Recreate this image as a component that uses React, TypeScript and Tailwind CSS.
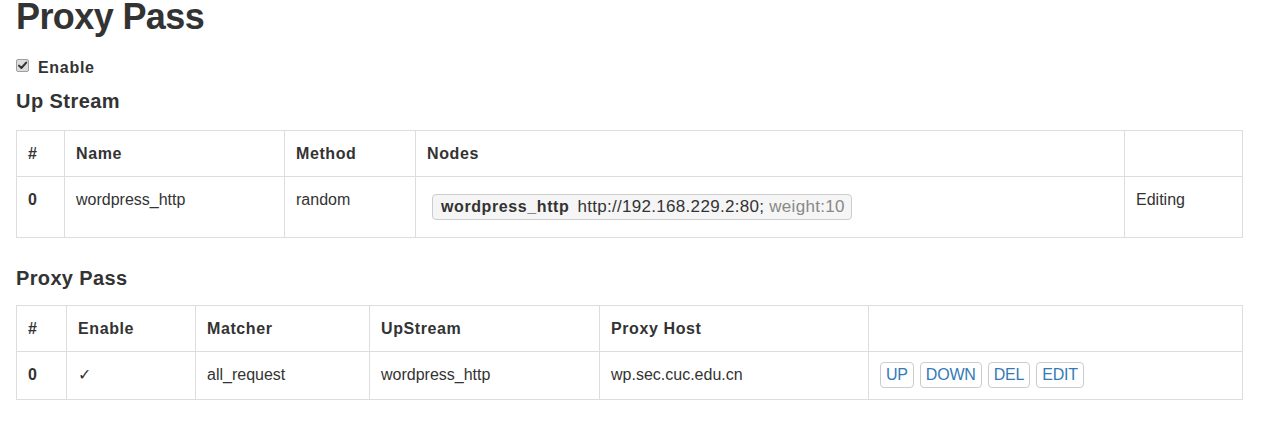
import React from "react";

const cell = "border border-[#dddddd] px-[11px] py-[11px] align-top text-left leading-[23px]";
const th = cell + " font-bold tracking-[0.6px]";

function Check() {
  return (
    <span className="mt-[3px] inline-flex h-[13px] w-[13px] items-center justify-center rounded-[2px] border border-[#a0a0a0] bg-[#dcdcdc]">
      <svg width="11" height="11" viewBox="0 0 11 11">
        <path d="M2 5.6 L4.4 8 L9.2 2.6" fill="none" stroke="#333" strokeWidth="2" strokeLinecap="round" strokeLinejoin="round" />
      </svg>
    </span>
  );
}

function Btn({ children }: { children: React.ReactNode }) {
  return (
    <span className="inline-block rounded-[4px] border border-[#cccccc] bg-white px-[5px] py-[1px] leading-[22px] tracking-[-0.2px] text-[#337ab7]">
      {children}
    </span>
  );
}

export default function App() {
  return (
    <div
      className="min-h-[423px] bg-white px-[16px] text-[16px] text-[#333333]"
      style={{ fontFamily: '"Liberation Sans", Arial, sans-serif' }}
    >
      <h1 className="m-0 text-[36px] font-bold leading-[34px] tracking-[-0.6px]">Proxy Pass</h1>

      <div className="mt-[22px] flex h-[23px] items-start leading-[23px]">
        <Check />
        <span className="ml-[9px] font-bold tracking-[0.7px]">Enable</span>
      </div>

      <h4 className="m-0 mt-[11px] text-[20px] font-bold leading-[22px] tracking-[0.45px]">Up Stream</h4>

      <table className="mt-[18px] w-[1227px] table-fixed border-collapse">
        <colgroup>
          <col className="w-[48px]" />
          <col className="w-[220px]" />
          <col className="w-[131px]" />
          <col className="w-[709px]" />
          <col />
        </colgroup>
        <thead>
          <tr>
            <th className={th}>#</th>
            <th className={th}>Name</th>
            <th className={th}>Method</th>
            <th className={th}>Nodes</th>
            <th className={th}></th>
          </tr>
        </thead>
        <tbody>
          <tr>
            <th className={th}>0</th>
            <td className={cell}>wordpress_http</td>
            <td className={cell}>random</td>
            <td className={cell}>
              <div className="py-[6px] pl-[5px]">
                <span className="inline-flex items-baseline rounded-[4px] border border-[#cccccc] bg-[#f5f5f5] py-[1px] pl-[8px] pr-[6px] leading-[22px]">
                  <span className="font-bold tracking-[0.6px]">wordpress_http</span>
                  <span className="ml-[8px] text-[17px] tracking-[0.3px]">
                    http://192.168.229.2:80;{" "}
                    <span className="text-[#888888]">weight:10</span>
                  </span>
                </span>
              </div>
            </td>
            <td className={cell}>Editing</td>
          </tr>
        </tbody>
      </table>

      <h4 className="m-0 mt-[29px] text-[20px] font-bold leading-[22px] tracking-[0.35px]">Proxy Pass</h4>

      <table className="mt-[16px] w-[1227px] table-fixed border-collapse">
        <colgroup>
          <col className="w-[50px]" />
          <col className="w-[129px]" />
          <col className="w-[174px]" />
          <col className="w-[230px]" />
          <col className="w-[269px]" />
          <col />
        </colgroup>
        <thead>
          <tr>
            <th className={th}>#</th>
            <th className={th}>Enable</th>
            <th className={th}>Matcher</th>
            <th className={th}>UpStream</th>
            <th className={th}>Proxy Host</th>
            <th className={th}></th>
          </tr>
        </thead>
        <tbody>
          <tr>
            <th className={th}>0</th>
            <td className={cell}>✓</td>
            <td className={cell}>all_request</td>
            <td className={cell}>wordpress_http</td>
            <td className={cell}>wp.sec.cuc.edu.cn</td>
            <td className="border border-[#dddddd] px-[11px] pb-[11px] pt-[10px] align-top leading-[23px]">
              <div className="flex gap-[6px]">
                <Btn>UP</Btn>
                <Btn>DOWN</Btn>
                <Btn>DEL</Btn>
                <Btn>EDIT</Btn>
              </div>
            </td>
          </tr>
        </tbody>
      </table>
    </div>
  );
}
